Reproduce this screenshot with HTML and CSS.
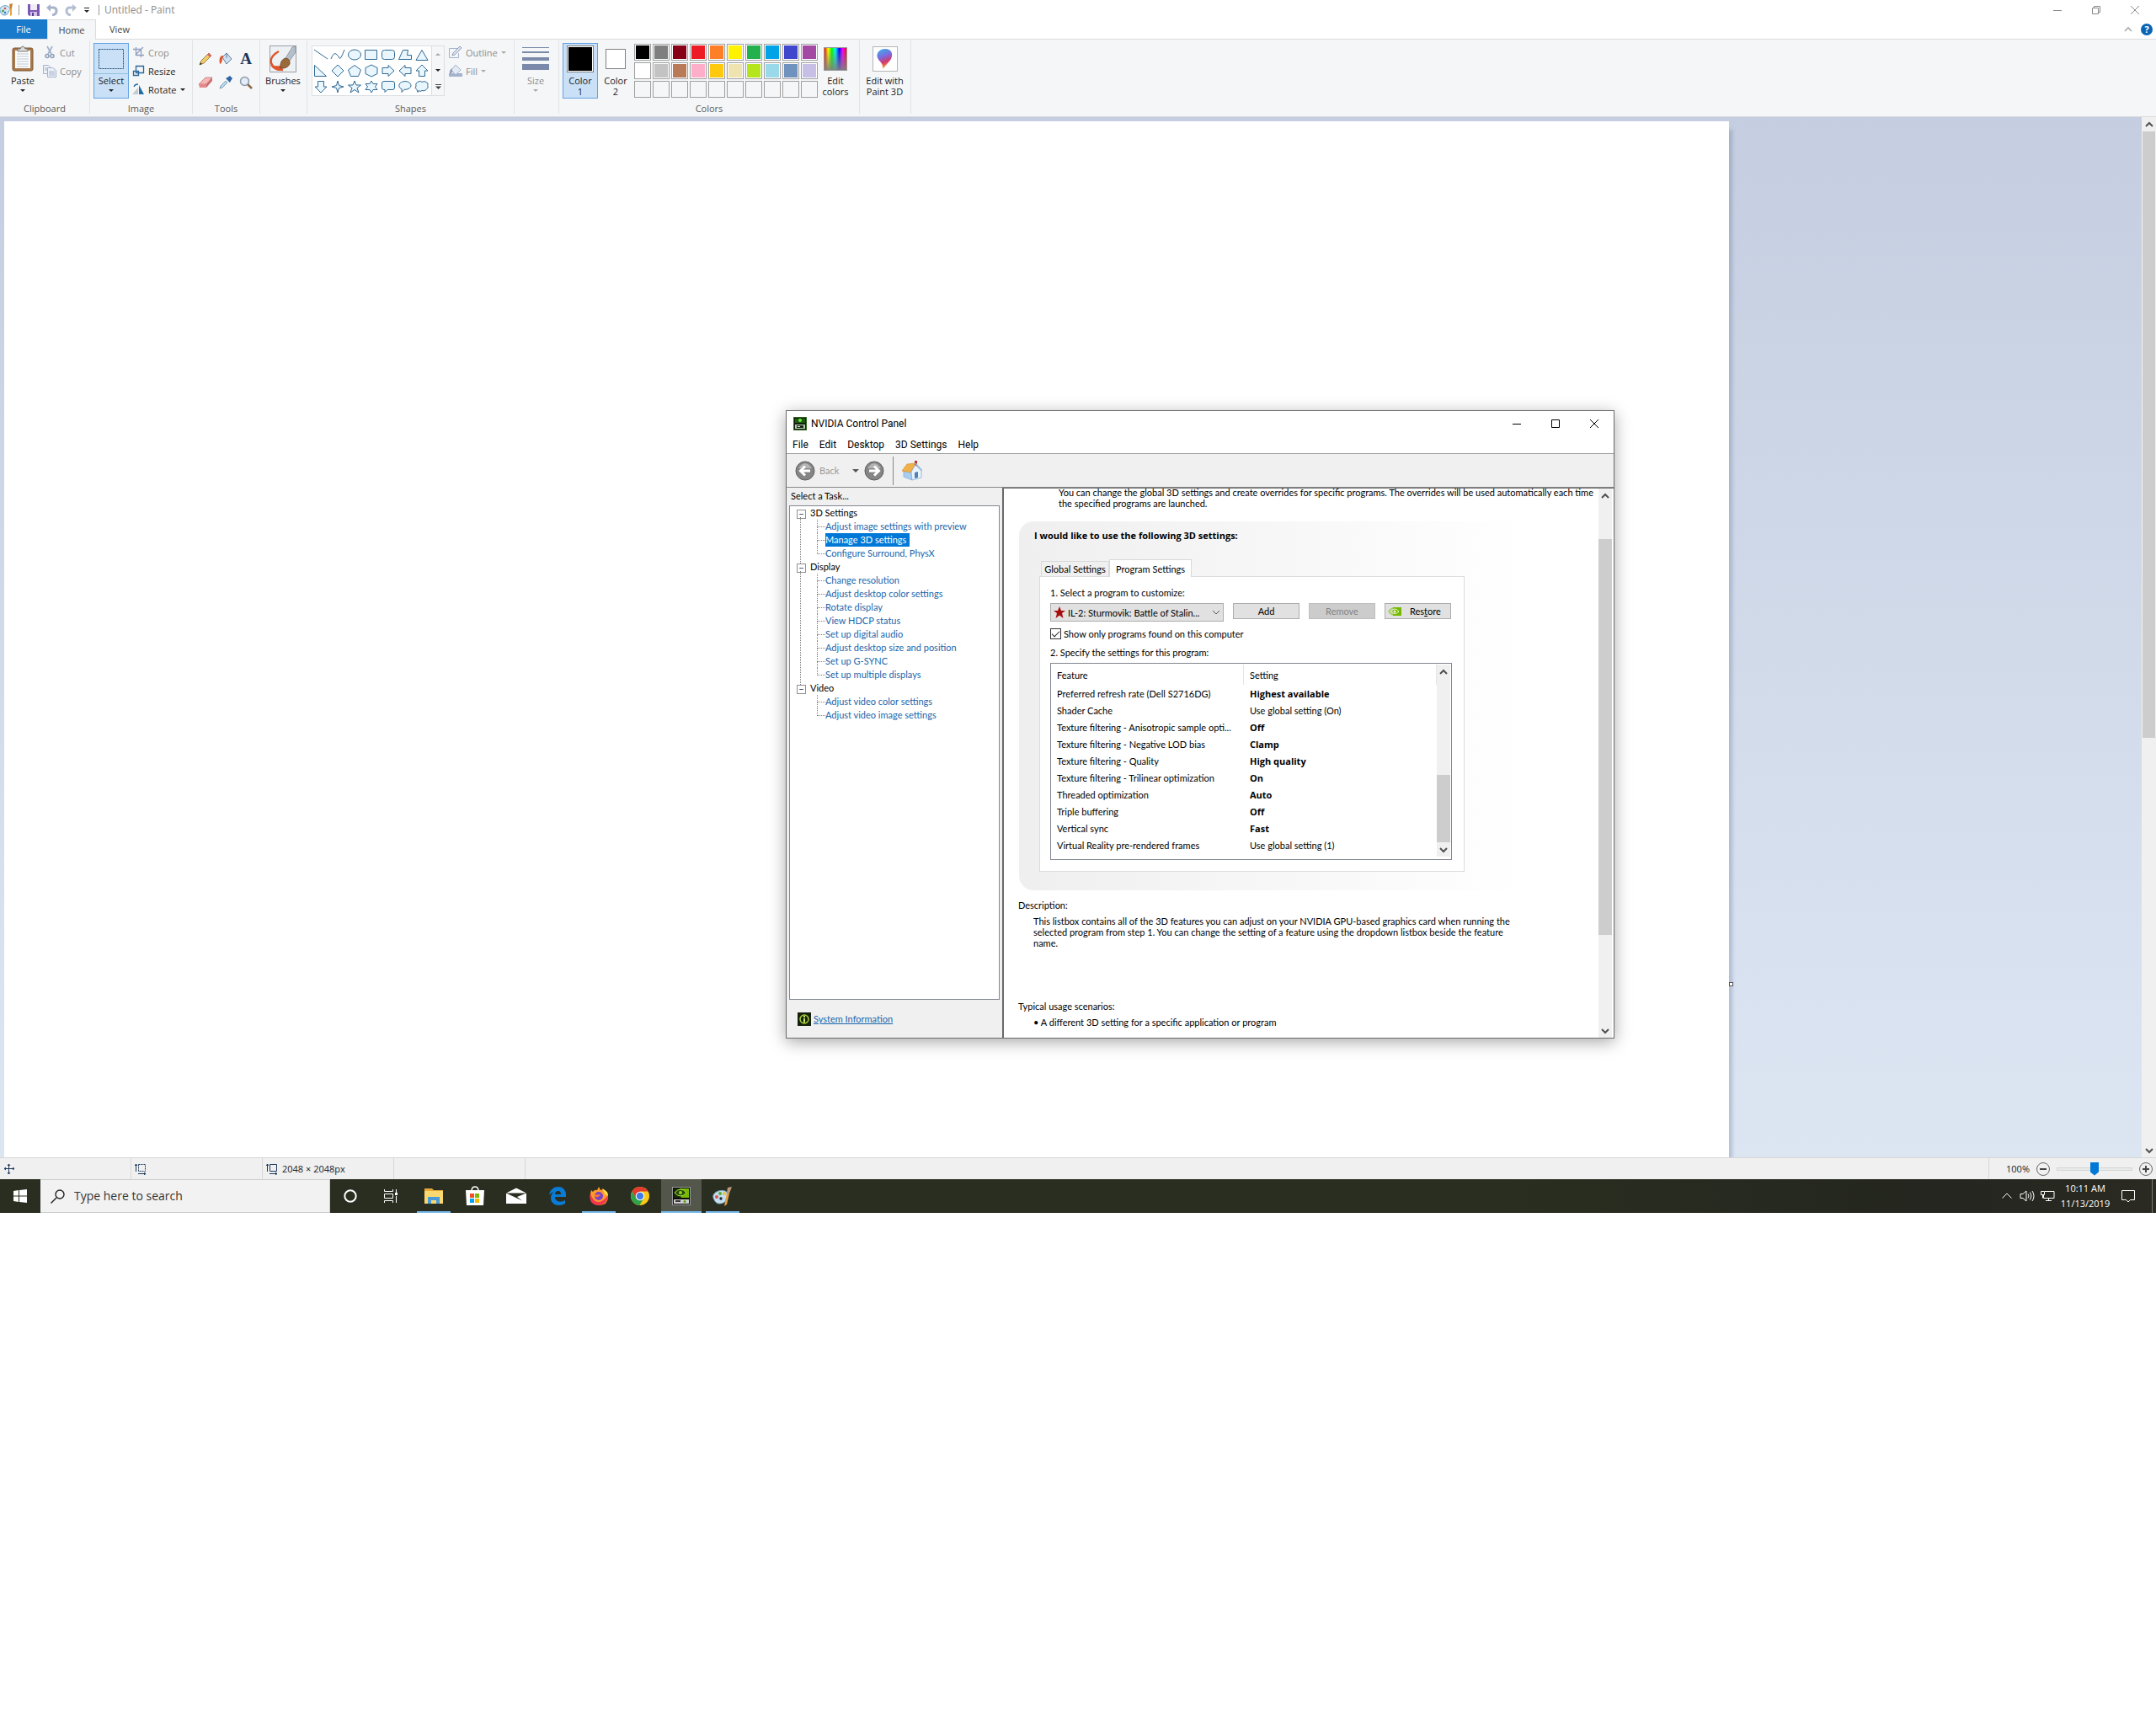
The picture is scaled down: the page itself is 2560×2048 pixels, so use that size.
FILE: index.html
```html
<!DOCTYPE html>
<html lang="en">
<head>
  <meta charset="UTF-8" />
  <meta name="viewport" content="width=device-width, initial-scale=1" />
  <title>Untitled - Paint</title>
  <link rel="stylesheet" href="styles.css">
</head>
<body>
  <div class="desktop">
    <div class="paint">
      <header class="titlebar">
        <svg class="app-icon" viewBox="0 0 16 16"><path d="M0 9c-2-6 9-9 12-3 1 3-2 2-2 4s-2 4-5 4-4-3-5-5z" fill="#d5e8f5" stroke="#5b9cc4"/><circle cx="3.500" cy="9" r="1.400" fill="#3fa33f"/><circle cx="6" cy="6" r="1.300" fill="#d9534f"/><circle cx="6" cy="11" r="1.300" fill="#3a7bd5"/><path d="M12 5h2v9l-2 1z" fill="#e8a33d"/><path d="M11 1l4-1-1 6h-2z" fill="#c9812b"/></svg>
        <span class="bar"></span>
        <button class="qat" aria-label="Save"><svg viewBox="0 0 14 14"><path d="M0 0h14v14H2l-2-2z" fill="#7e57b5"/><path d="M3 0h8v7H3z" fill="#f1edf8"/><path d="M3 9h8v5H3z" fill="#cfc3e6"/><path d="M5 10h2v4H5z" fill="#5a3b8c"/></svg></button>
        <button class="qat" aria-label="Undo"><svg viewBox="0 0 14 14"><path d="M3 4h5q4 0 4 4t-5 5" fill="none" stroke="#a9b4cb" stroke-width="3"/><path d="M0 4l5-4v9z" fill="#a9b4cb"/></svg></button>
        <button class="qat" aria-label="Redo"><svg viewBox="0 0 14 14"><path d="M11 4H6q-4 0-4 4t5 5" fill="none" stroke="#b5bfd3" stroke-width="3"/><path d="M14 4L9 0v9z" fill="#b5bfd3"/></svg></button>
        <button class="qat qat-more" aria-label="Customize"><svg viewBox="0 0 8 8"><path d="M1 1.500h6" stroke="#222"/><path d="M1 4h6L4 7z" fill="#222"/></svg></button>
        <span class="bar"></span>
        <span class="title">Untitled - Paint</span>
        <div class="win-buttons">
          <button aria-label="Minimize"><svg viewBox="0 0 10 10"><path d="M0 5.500h10"/></svg></button>
          <button aria-label="Restore"><svg viewBox="0 0 10 10"><path d="M.5 2.500h7v7h-7zM2.500 2.500v-2h7v7h-2"/></svg></button>
          <button aria-label="Close"><svg viewBox="0 0 10 10"><path d="M0 0l10 10M10 0L0 10"/></svg></button>
        </div>
      </header>

      <nav class="tabs">
        <button class="tab file">File</button>
        <button class="tab home">Home</button>
        <button class="tab">View</button>
        <div class="tabs-right">
          <button aria-label="Collapse ribbon"><svg width="10" height="8" viewBox="0 0 10 8"><path d="M1 6l4-4 4 4" fill="none" stroke="#aaa" stroke-width="1.600"/></svg></button>
          <button class="help" aria-label="Help">?</button>
        </div>
      </nav>

      <div class="ribbon">
        <section class="group">
          <div class="group-body clipboard">
            <button class="big">
              <span class="pic"><svg width="26" height="32" viewBox="0 0 26 32"><rect x="1" y="3" width="24" height="27" rx="2" fill="#a9794a" stroke="#7d5630"/><path d="M4 6h18v21H4z" fill="#fff"/><path d="M6 10h14M6 13h14M6 16h14M6 19h14M6 22h14M6 25h14" stroke="#b9c4d0"/><path d="M7 7V4h3q3-6 6 0h3v3z" fill="#dcdcdc" stroke="#777"/></svg></span>
              <span class="big-label">Paste</span><i class="caret"></i>
            </button>
            <div class="small-col">
              <button class="small off"><svg viewBox="0 0 16 16"><path d="M5 1l5 9M11 1L6 10" stroke="#9fb0c8" stroke-width="1.600" fill="none"/><circle cx="5" cy="12.500" r="2" fill="none" stroke="#8a9dba" stroke-width="1.500"/><circle cx="11" cy="12.500" r="2" fill="none" stroke="#8a9dba" stroke-width="1.500"/></svg>Cut</button>
              <button class="small off"><svg viewBox="0 0 16 16"><path d="M.5 1.500h6l3 3v7h-9z" fill="#eef2f8" stroke="#a3b3cd"/><path d="M5.500 4.500h6l4 3v8h-10z" fill="#eef2f8" stroke="#a3b3cd"/><path d="M7 9h7M7 11h7M7 13h7M2 5h3M2 7h3" stroke="#a3b3cd"/></svg>Copy</button>
            </div>
          </div>
          <h2>Clipboard</h2>
        </section>

        <section class="group">
          <div class="group-body image">
            <button class="big on split">
              <span class="pic"><svg width="30" height="24" viewBox="0 0 30 24"><rect x=".5" y=".5" width="29" height="23" fill="none" stroke="#1f4e79" stroke-dasharray="2 1"/></svg></span>
              <span class="big-label">Select</span><i class="caret"></i>
            </button>
            <div class="small-col wide">
              <button class="small off"><svg viewBox="0 0 16 16"><path d="M5.500 2v9.500H15M2 4.500h9.500V14M5 11l9-9" fill="none" stroke="#8f9fbd" stroke-width="1.300"/></svg>Crop</button>
              <button class="small"><svg viewBox="0 0 16 16"><path d="M5.500 2.500h9v8h-9zM2.500 8.500h6v5h-6z" fill="#f5f6f7" stroke="#2a679c" stroke-width="1.300"/></svg>Resize</button>
              <button class="small"><svg viewBox="0 0 16 16"><path d="M8 14V6L1 14z" fill="#c3cbd3"/><path d="M9 14V3l6 11z" fill="#1f6ea8"/><path d="M3 5q1-3 5-3" fill="none" stroke="#1f6ea8" stroke-width="1.300"/></svg>Rotate<i class="caret"></i></button>
            </div>
          </div>
          <h2>Image</h2>
        </section>

        <section class="group">
          <div class="group-body tools">
            <button aria-label="Pencil"><svg viewBox="0 0 16 16"><path d="M1 15l2-5L12 1l3 3-9 9z" fill="#f3cd6b" stroke="#8a6b2a" stroke-width=".8"/><path d="M12 1l3 3-2 2-3-3z" fill="#d96b6b"/><path d="M1 15l1-3 2 2z" fill="#333"/></svg></button>
            <button aria-label="Fill"><svg viewBox="0 0 16 16"><path d="M4 6l5-5 6 7-6 6z" fill="#cfe0ee" stroke="#5c7f9e"/><path d="M9 1v6" stroke="#5c7f9e"/><path d="M6 4Q-1 3 1 14q3-1 3-7z" fill="#e2552f"/></svg></button>
            <button aria-label="Text" class="text-tool">A</button>
            <button aria-label="Eraser"><svg viewBox="0 0 16 16"><path d="M0 10L8 2h8l-7 8z" fill="#f7b5b5" stroke="#b96a6a" stroke-width=".7"/><path d="M0 10h9v4H1z" fill="#e38b8b"/><path d="M9 10l7-8v4l-7 8z" fill="#c96f6f"/></svg></button>
            <button aria-label="Color picker"><svg viewBox="0 0 16 16"><path d="M1 15l1-3 6-6 2 2-6 6z" fill="#bcd8ee" stroke="#5a84a8" stroke-width=".7"/><path d="M8 3l5 5 1-2 2-3-3-3-3 2z" fill="#2b65a5"/></svg></button>
            <button aria-label="Magnifier"><svg viewBox="0 0 16 16"><path d="M10 10l5 5" stroke="#8a6a4a" stroke-width="2.500"/><circle cx="6.500" cy="6.500" r="5" fill="#e1eefa" stroke="#8f9aa6" stroke-width="1.500"/></svg></button>
          </div>
          <h2>Tools</h2>
        </section>

        <section class="group">
          <div class="group-body brushes">
            <button class="big">
              <span class="pic"><svg width="32" height="32" viewBox="0 0 32 32"><rect x=".5" y=".5" width="31" height="31" fill="#eef1f4" stroke="#9aa0a6"/><path d="M11 7Q0 13 2 21q3 8 14 8" fill="none" stroke="#e0552b" stroke-width="2.500"/><path d="M1 23q5 2 12 1l3 6Q5 31 1 23z" fill="#e0552b"/><path d="M19 15L27 2l4-1v7l-7 10z" fill="#b4bfca" stroke="#7c8894" stroke-width=".7"/><path d="M13 27q-1-10 6-12 6 1 5 7-3 6-11 5z" fill="#9b6a3a" stroke="#6b4420" stroke-width=".8"/></svg></span>
              <span class="big-label">Brushes</span><i class="caret"></i>
            </button>
          </div>
          <h2></h2>
        </section>

        <section class="group">
          <div class="group-body shapes">
            <div class="gallery">
              <div class="shape-grid">
                <button aria-label="Line"><svg viewBox="0 0 16 14"><path d="M0 1l16 11"/></svg></button>
                <button aria-label="Curve"><svg viewBox="0 0 16 14"><path d="M0 12Q3 4 6 6t4 5 6-10" fill="none"/></svg></button>
                <button aria-label="Oval"><svg viewBox="0 0 16 14"><ellipse cx="8" cy="7" rx="7.500" ry="6"/></svg></button>
                <button aria-label="Rectangle"><svg viewBox="0 0 16 14"><path d="M.5 1.500h14v11H.5z"/></svg></button>
                <button aria-label="Rounded rectangle"><svg viewBox="0 0 16 14"><rect x=".5" y="1.500" width="15" height="11" rx="3"/></svg></button>
                <button aria-label="Polygon"><svg viewBox="0 0 16 14"><path d="M5.500 1.500h6l-1 6h5v5H.5z"/></svg></button>
                <button aria-label="Triangle"><svg viewBox="0 0 16 14"><path d="M8 1.500l7 12H1z"/></svg></button>
                <button aria-label="Right triangle"><svg viewBox="0 0 16 14"><path d="M.5 .5v13h14z"/></svg></button>
                <button aria-label="Diamond"><svg viewBox="0 0 16 14"><path d="M8 0l7 7-7 7-7-7z"/></svg></button>
                <button aria-label="Pentagon"><svg viewBox="0 0 16 14"><path d="M8 .5l7.500 5.500-3 7.500h-9L.5 6z"/></svg></button>
                <button aria-label="Hexagon"><svg viewBox="0 0 16 14"><path d="M8 0l7 3.500v7L8 14l-7-3.500v-7z"/></svg></button>
                <button aria-label="Right arrow"><svg viewBox="0 0 16 14"><path d="M1 3.500h7V.5L15 7l-7 6.500v-3H1z"/></svg></button>
                <button aria-label="Left arrow"><svg viewBox="0 0 16 14"><path d="M15 3.500H8V.5L1 7l7 6.500v-3h7z"/></svg></button>
                <button aria-label="Up arrow"><svg viewBox="0 0 16 14"><path d="M8 0l7 7h-3.500v6.500h-7V7H1z"/></svg></button>
                <button aria-label="Down arrow"><svg viewBox="0 0 16 14"><path d="M8 14l7-7h-3.500V.5h-7V7H1z"/></svg></button>
                <button aria-label="Four-point star"><svg viewBox="0 0 16 14"><path d="M8 0l1.500 5.500L15 7 9.500 8.500 8 14 6.500 8.500 1 7l5.500-1.500z"/></svg></button>
                <button aria-label="Five-point star"><svg viewBox="0 0 16 14"><path d="M8 0l2 5h5.500L11 8.500l2 5.500-5-3.500L3 14l2-5.500L.5 5H6z"/></svg></button>
                <button aria-label="Six-point star"><svg viewBox="0 0 16 14"><path d="M8 0l2 3.500h5L12.500 7l2.500 3.500h-5L8 14l-2-3.500H1L3.500 7 1 3.500h5z"/></svg></button>
                <button aria-label="Rounded callout"><svg viewBox="0 0 16 14"><path d="M3 .5h10q2.500 0 2.500 2.500v5q0 2.500-2.500 2.500H7L4 13.500v-3H3Q.5 10.500.5 8V3Q.5.500 3 .5z"/></svg></button>
                <button aria-label="Oval callout"><svg viewBox="0 0 16 14"><path d="M4 13.500V9.800C-2 7 1 .5 8 .5s10 7 3 9.300q-2 .7-4 .5z"/></svg></button>
                <button aria-label="Cloud callout"><svg viewBox="0 0 16 14"><path d="M4 1q3-1.500 4 .5 3-2 5 0 3 1 2 4 1 3-2 5-2 2-5 1-2 2-4 0l-1 2-1-3Q-1 9 1 6 0 2 4 1z"/></svg></button>
              </div>
              <div class="gallery-scroll">
                <button aria-label="Scroll up"><i class="caret up"></i></button>
                <button aria-label="Scroll down"><i class="caret"></i></button>
                <button aria-label="More shapes"><svg width="7" height="6" viewBox="0 0 7 6"><path d="M0 .5h7" stroke="#444"/><path d="M0 2.500h7L3.500 6z" fill="#444"/></svg></button>
              </div>
            </div>
            <div class="small-col">
              <button class="small off"><svg viewBox="0 0 16 16"><path d="M.5 3.500h10M.5 3.500v11h11V9" fill="none" stroke="#a3b3cd"/><path d="M4 12l1-3 8-8 2 2-8 8z" fill="#dbe2ee" stroke="#8f9fbd"/></svg>Outline<i class="caret"></i></button>
              <button class="small off"><svg viewBox="0 0 16 16"><path d="M0 11h16v4H0z" fill="#a3b3cd"/><path d="M3 7l5-6 6 6-6 6z" fill="#e4eaf3" stroke="#a3b3cd"/><path d="M4 5Q0 7 1 12l3-2z" fill="#8f9fbd"/></svg>Fill<i class="caret"></i></button>
            </div>
          </div>
          <h2>Shapes</h2>
        </section>

        <section class="group">
          <div class="group-body size">
            <button class="big off">
              <span class="pic"><svg width="32" height="28" viewBox="0 0 32 28"><path d="M0 0h32v1H0zM0 5h32v2H0zM0 12h32v4H0zM0 20h32v7H0z" fill="#7b8aaa"/></svg></span>
              <span class="big-label">Size</span><i class="caret"></i>
            </button>
          </div>
          <h2></h2>
        </section>

        <section class="group">
          <div class="group-body colors">
            <button class="big on"><span class="pic"><span class="well black"></span></span><span class="big-label">Color<br>1</span></button>
            <button class="big"><span class="pic"><span class="well small-well white"></span></span><span class="big-label">Color<br>2</span></button>
            <div class="swatches">
              <button class="swatch black" aria-label="Black"></button>
              <button class="swatch gray" aria-label="Gray"></button>
              <button class="swatch darkred" aria-label="Dark red"></button>
              <button class="swatch red" aria-label="Red"></button>
              <button class="swatch orange" aria-label="Orange"></button>
              <button class="swatch yellow" aria-label="Yellow"></button>
              <button class="swatch green" aria-label="Green"></button>
              <button class="swatch turquoise" aria-label="Turquoise"></button>
              <button class="swatch indigo" aria-label="Indigo"></button>
              <button class="swatch purple" aria-label="Purple"></button>
              <button class="swatch white" aria-label="White"></button>
              <button class="swatch lightgray" aria-label="Light gray"></button>
              <button class="swatch brown" aria-label="Brown"></button>
              <button class="swatch rose" aria-label="Rose"></button>
              <button class="swatch gold" aria-label="Gold"></button>
              <button class="swatch lightyellow" aria-label="Light yellow"></button>
              <button class="swatch lime" aria-label="Lime"></button>
              <button class="swatch lightturquoise" aria-label="Light turquoise"></button>
              <button class="swatch bluegray" aria-label="Blue gray"></button>
              <button class="swatch lavender" aria-label="Lavender"></button>
              <button class="swatch none" aria-label="Custom 1"></button>
              <button class="swatch none" aria-label="Custom 2"></button>
              <button class="swatch none" aria-label="Custom 3"></button>
              <button class="swatch none" aria-label="Custom 4"></button>
              <button class="swatch none" aria-label="Custom 5"></button>
              <button class="swatch none" aria-label="Custom 6"></button>
              <button class="swatch none" aria-label="Custom 7"></button>
              <button class="swatch none" aria-label="Custom 8"></button>
              <button class="swatch none" aria-label="Custom 9"></button>
              <button class="swatch none" aria-label="Custom 10"></button>
            </div>
            <button class="big"><span class="pic"><span class="rainbow"></span></span><span class="big-label">Edit<br>colors</span></button>
          </div>
          <h2>Colors</h2>
        </section>

        <section class="group">
          <div class="group-body paint3d">
            <button class="big">
              <span class="pic"><svg width="30" height="30" viewBox="0 0 30 30"><defs><linearGradient id="drop" x1="0" y1="0" x2=".3" y2="1"><stop offset="0" stop-color="#35b8e8"/><stop offset=".45" stop-color="#7a6be0"/><stop offset=".75" stop-color="#d6396b"/><stop offset="1" stop-color="#f5a623"/></linearGradient></defs><rect x=".5" y=".5" width="29" height="29" fill="#fff" stroke="#b5b5b5"/><path d="M12 27q1-5-3-9-5-5-3-10 3-5 9-5 6 0 8 5 1 6-4 11z" fill="url(#drop)"/></svg></span>
              <span class="big-label">Edit with<br>Paint 3D</span>
            </button>
          </div>
          <h2></h2>
        </section>
      </div>

      <main class="workspace">
        <div class="canvas-area">
          <div class="canvas"></div>
          <span class="handle"></span>
        </div>
        <div class="scroll paint-scroll">
          <button aria-label="Scroll up"><svg viewBox="0 0 10 8"><path d="M1 6l4-4 4 4"/></svg></button>
          <span class="thumb"></span>
          <button class="down" aria-label="Scroll down"><svg viewBox="0 0 10 8"><path d="M1 2l4 4 4-4"/></svg></button>
        </div>
      </main>

      <footer class="status">
        <div class="cell"><svg viewBox="0 0 14 14"><path d="M6.500 1v12M1 6.500h12M5 3l1.500-2L8 3M5 11l1.500 2L8 11M3 5L1 6.500 3 8M11 5l2 1.500L11 8"/></svg></div>
        <div class="cell"><svg viewBox="0 0 14 14"><path d="M1.500 10V1M0 3l1.500-2L3 3M4 12.500h9M11 11l2 1.500-2 1.500"/><path d="M4.500 1.500h8v8h-8z" stroke-dasharray="2 1"/></svg></div>
        <div class="cell"><svg viewBox="0 0 14 14"><path d="M1.500 10V1M0 3l1.500-2L3 3M4 12.500h9M11 11l2 1.500-2 1.500M4.500 1.500h8v8h-8z"/></svg>2048 × 2048px</div>
        <div class="cell"></div>
        <div class="zoom">
          <label for="zoom">100%</label>
          <button aria-label="Zoom out"><svg viewBox="0 0 10 10"><path d="M1 5h8"/></svg></button>
          <input type="range" id="zoom" min="0" max="100" value="50">
          <button aria-label="Zoom in"><svg viewBox="0 0 10 10"><path d="M1 5h8M5 1v8"/></svg></button>
        </div>
      </footer>
    </div>

    <div class="nv">
      <header class="nv-title">
        <svg width="16" height="16" viewBox="0 0 16 16"><path d="M0 0h16v16H0z" fill="#2f6a1c"/><path d="M1 1h14v14H1z" fill="#14200f"/><path d="M2 2h12v5H2z" fill="#1f5a10"/><circle cx="8" cy="4" r="2" fill="#6df03a"/><path d="M2 9h12v5H2z" fill="#b9c7b4"/><path d="M4 10h8v3H4z" fill="#1a2d14"/><path d="M5 11h3v1H5z" fill="#dfe8da"/></svg>
        <span>NVIDIA Control Panel</span>
        <div class="win-buttons dark">
          <button aria-label="Minimize"><svg viewBox="0 0 10 10"><path d="M0 5.500h10"/></svg></button>
          <button aria-label="Maximize"><svg viewBox="0 0 10 10"><path d="M.5.500h9v9h-9z"/></svg></button>
          <button aria-label="Close"><svg viewBox="0 0 10 10"><path d="M0 0l10 10M10 0L0 10"/></svg></button>
        </div>
      </header>
      <nav class="nv-menu">
        <button>File</button><button>Edit</button><button>Desktop</button><button>3D Settings</button><button>Help</button>
      </nav>
      <div class="nv-toolbar">
        <button class="nav-back" disabled>
          <svg width="24" height="24" viewBox="0 0 24 24"><circle cx="12" cy="12" r="11" fill="#858585" stroke="#5f5f5f"/><path d="M4 9Q12-3 20 9z" fill="#b5b5b5"/><path d="M18 12H7M12 6.500L6.500 12l5.500 5.500" fill="none" stroke="#fff" stroke-width="3"/></svg>
          Back
        </button>
        <button class="history" aria-label="History"><i class="caret gray-caret"></i></button>
        <button aria-label="Forward"><svg width="24" height="24" viewBox="0 0 24 24"><circle cx="12" cy="12" r="11" fill="#858585" stroke="#5f5f5f"/><path d="M4 9Q12-3 20 9z" fill="#b5b5b5"/><path d="M6 12h11M12 6.500l5.500 5.500-5.500 5.500" fill="none" stroke="#fff" stroke-width="3"/></svg></button>
        <span class="nv-sep"></span>
        <button aria-label="Home"><svg width="24" height="24" viewBox="0 0 24 24"><path d="M15 0h3v7h-3z" fill="#b5342a"/><path d="M2 12l10 1v10l-10-4z" fill="#a9cdf0" stroke="#7aa7d4" stroke-width=".7"/><path d="M11 13l5-8 7 7v8l-11 3z" fill="#e9f3fc" stroke="#7aa7d4" stroke-width=".7"/><path d="M15 14l4-1v7l-4 1z" fill="#4f7fb5"/><path d="M0 12L6 4l10-1-6 11z" fill="#f2b04c" stroke="#c98a2c" stroke-width=".6"/><path d="M16 3l8 9" stroke="#9fbbd8" stroke-width="1.500"/></svg></button>
      </div>
      <div class="nv-main">
        <aside class="nv-side">
          <div class="task-title">Select a Task...</div>
          <div class="tree">
            <ul>
              <li><span class="root">3D Settings</span>
                <ul>
                  <li><a href="#">Adjust image settings with preview</a></li>
                  <li><a href="#" class="sel">Manage 3D settings</a></li>
                  <li><a href="#">Configure Surround, PhysX</a></li>
                </ul>
              </li>
              <li><span class="root">Display</span>
                <ul>
                  <li><a href="#">Change resolution</a></li>
                  <li><a href="#">Adjust desktop color settings</a></li>
                  <li><a href="#">Rotate display</a></li>
                  <li><a href="#">View HDCP status</a></li>
                  <li><a href="#">Set up digital audio</a></li>
                  <li><a href="#">Adjust desktop size and position</a></li>
                  <li><a href="#">Set up G-SYNC</a></li>
                  <li><a href="#">Set up multiple displays</a></li>
                </ul>
              </li>
              <li><span class="root">Video</span>
                <ul>
                  <li><a href="#">Adjust video color settings</a></li>
                  <li><a href="#">Adjust video image settings</a></li>
                </ul>
              </li>
            </ul>
          </div>
          <div class="sysinfo">
            <svg width="16" height="16" viewBox="0 0 16 16"><path d="M0 0h16v16H0z" fill="#16200d"/><circle cx="8" cy="8" r="5" fill="none" stroke="#a4cf3a" stroke-width="1.500"/><path d="M7 4h2v2H7zM7 7h2v5H7z" fill="#c4e36a"/></svg>
            <a href="#">System Information</a>
          </div>
        </aside>

        <div class="nv-pane">
          <div class="page">
            <p class="intro">You can change the global 3D settings and create overrides for specific programs. The overrides will be used automatically each time<br>the specified programs are launched.</p>
            <section class="settings">
              <h3>I would like to use the following 3D settings:</h3>
              <div class="nv-tabs">
                <button>Global Settings</button>
                <button class="active">Program Settings</button>
              </div>
              <div class="panel">
                <label for="program">1. Select a program to customize:</label>
                <div class="program-row">
                  <div class="program">
                    <select id="program"><option>IL-2: Sturmovik: Battle of Stalin...</option></select>
                    <svg class="star" viewBox="0 0 14 14"><path d="M7 0l2 5h5l-4 3 1.500 6L7 10.500 2.500 14 4 8 0 5h5z" fill="#a80d0d"/></svg>
                    <svg class="chevron" viewBox="0 0 10 8"><path d="M1 2l4 4 4-4" fill="none" stroke="#555"/></svg>
                  </div>
                  <button>Add</button>
                  <button disabled>Remove</button>
                  <button class="restore"><svg width="16" height="10" viewBox="0 0 16 10"><path d="M0 5Q3 0 8 0v10Q3 10 0 5z" fill="#a9cf6a"/><path d="M6 0h10v10H6z" fill="#76b900"/><path d="M3 5q5-6 10 0-5 5-10 0z" fill="none" stroke="#e9f5d0"/><circle cx="8" cy="5" r="1.500" fill="#e9f5d0"/></svg><span>Res<u>t</u>ore</span></button>
                </div>
                <div class="check"><input type="checkbox" id="only" checked><label for="only">Show only programs found on this computer</label></div>
                <div class="step">2. Specify the settings for this program:</div>
                <div class="listbox">
                  <table>
                    <thead><tr><th>Feature</th><th>Setting</th></tr></thead>
                    <tbody>
                      <tr><td>Preferred refresh rate (Dell S2716DG)</td><td><b>Highest available</b></td></tr>
                      <tr><td>Shader Cache</td><td>Use global setting (On)</td></tr>
                      <tr><td>Texture filtering - Anisotropic sample opti...</td><td><b>Off</b></td></tr>
                      <tr><td>Texture filtering - Negative LOD bias</td><td><b>Clamp</b></td></tr>
                      <tr><td>Texture filtering - Quality</td><td><b>High quality</b></td></tr>
                      <tr><td>Texture filtering - Trilinear optimization</td><td><b>On</b></td></tr>
                      <tr><td>Threaded optimization</td><td><b>Auto</b></td></tr>
                      <tr><td>Triple buffering</td><td><b>Off</b></td></tr>
                      <tr><td>Vertical sync</td><td><b>Fast</b></td></tr>
                      <tr><td>Virtual Reality pre-rendered frames</td><td>Use global setting (1)</td></tr>
                    </tbody>
                  </table>
                  <div class="scroll list-scroll">
                    <button aria-label="Scroll up"><svg viewBox="0 0 10 8"><path d="M1 6l4-4 4 4"/></svg></button>
                    <span class="thumb"></span>
                    <button class="down" aria-label="Scroll down"><svg viewBox="0 0 10 8"><path d="M1 2l4 4 4-4"/></svg></button>
                  </div>
                </div>
              </div>
            </section>
            <h4>Description:</h4>
            <p class="desc">This listbox contains all of the 3D features you can adjust on your NVIDIA GPU-based graphics card when running the<br>selected program from step 1. You can change the setting of a feature using the dropdown listbox beside the feature<br>name.</p>
            <h4>Typical usage scenarios:</h4>
            <p class="usage">• A different 3D setting for a specific application or program</p>
          </div>
          <div class="scroll page-scroll">
            <button aria-label="Scroll up"><svg viewBox="0 0 10 8"><path d="M1 6l4-4 4 4"/></svg></button>
            <span class="thumb"></span>
            <button class="down" aria-label="Scroll down"><svg viewBox="0 0 10 8"><path d="M1 2l4 4 4-4"/></svg></button>
          </div>
        </div>
      </div>
    </div>

    <div class="taskbar">
      <button class="start" aria-label="Start"><svg width="16" height="16" viewBox="0 0 16 16"><path d="M0 2l6-1v6.500H0zM7 1l9-1v7.500H7zM0 8.500h6V15l-6-1zM7 8.500h9V16l-9-1z" fill="#fff"/></svg></button>
      <div class="search">
        <svg width="17" height="17" viewBox="0 0 17 17"><circle cx="11" cy="6" r="5" fill="none" stroke="#222" stroke-width="1.400"/><path d="M7 10l-6.500 6.500" stroke="#222" stroke-width="1.400"/></svg>
        <input type="text" placeholder="Type here to search" aria-label="Type here to search">
      </div>
      <button aria-label="Cortana"><svg width="16" height="16" viewBox="0 0 16 16"><circle cx="8" cy="8" r="6.700" fill="none" stroke="#fff" stroke-width="2"/></svg></button>
      <button aria-label="Task View"><svg width="16" height="16" viewBox="0 0 16 16"><path d="M.5 0v2.500h10V0M.5 16v-2.500h10V16M.5 5.500h10v5H.5zM14.500 0v4M14.500 8v8" fill="none" stroke="#fff"/><path d="M13 4h3v3h-3z" fill="#fff"/></svg></button>
      <div class="apps">
        <button class="open" aria-label="File Explorer"><svg width="22" height="20" viewBox="0 0 22 20"><path d="M0 1h9l2 2h11v16H0z" fill="#e8a93a"/><path d="M0 4h22v15H0z" fill="#fbd86f"/><path d="M4 19v-8h14v8h-4v-4H8v4z" fill="#4a9bd8"/></svg></button>
        <button aria-label="Store"><svg width="24" height="24" viewBox="0 0 24 24"><path d="M8 6q0-5 4-5t4 5" fill="none" stroke="#fff" stroke-width="1.500"/><path d="M1 5h22l-1 18H2z" fill="#fff"/><path d="M6 9h5v5H6z" fill="#f25022"/><path d="M12 9h5v5h-5z" fill="#7fba00"/><path d="M6 15h5v5H6z" fill="#00a4ef"/><path d="M12 15h5v5h-5z" fill="#ffb900"/></svg></button>
        <button aria-label="Mail"><svg width="24" height="20" viewBox="0 0 24 20"><path d="M0 7l12-6 12 6v12H0z" fill="#fff"/><path d="M0 6.500h24L13 11l6 4.500z" fill="#292d20"/><path d="M1 6h22L12 .5z" fill="#fff"/></svg></button>
        <button aria-label="Edge"><svg width="22" height="22" viewBox="0 0 22 22"><path d="M1 10C2 3 7 0 12 0c6 0 9 5 9 9v3H8c0 6 7 7 12 4v4c-7 4-17 2-17-7 0-3 2-6 4-7-3 1-5 2-6 4zM8 9h7q0-4-3-4-4 0-4 4z" fill="#0a7cd6"/></svg></button>
        <button class="open" aria-label="Firefox"><svg width="24" height="24" viewBox="0 0 24 24"><path d="M3 5l2 2q2-3 5-2l2-4 2 4 3-1 2 4 3-1q4 16-10 16-14-1-9-18z" fill="#ff9a2b"/><path d="M2 9q-3 13 10 14 10-1 11-12-6 8-11 8-7 0-10-10z" fill="#f3364e"/><circle cx="12" cy="12" r="5" fill="#7a44c9"/><path d="M6 9q4 3 8 0-1 5-6 4z" fill="#ff7a2b"/><path d="M16 3q7 3 7 9-2-2-3-1z" fill="#ffdf4a"/></svg></button>
        <button aria-label="Chrome"><svg width="22" height="22" viewBox="0 0 22 22"><circle cx="11" cy="11" r="11" fill="#fbc916"/><path d="M1.500 5.500A11 11 0 0 1 20.500 5.500H11L6 14z" fill="#e33b2e"/><path d="M1.500 5.500A11 11 0 0 0 10.500 22L15.500 13.500 6.500 14z" fill="#2fa24c"/><circle cx="11" cy="11" r="5.300" fill="#fff"/><circle cx="11" cy="11" r="4.200" fill="#3f7ee8"/></svg></button>
        <button class="open active" aria-label="NVIDIA Control Panel"><svg width="22" height="22" viewBox="0 0 22 22"><path d="M0 0h22v22H0z" fill="#9a9a9a"/><path d="M1 1h20v20H1z" fill="#0a0a0a"/><path d="M2 2h18v11H2z" fill="#182b08"/><path d="M9 2h11v11h-9z" fill="#76b900"/><path d="M3 7q7-8 14 0-7 8-14 0z" fill="#2a4a0c" stroke="#a8e63a"/><circle cx="10" cy="7" r="2" fill="#8fd61a"/><path d="M2 15h18v5H2z" fill="#cfcfcf"/><path d="M4 16h6v2H4z" fill="#333"/><circle cx="15" cy="17.500" r="1.500" fill="#5a9c10"/></svg></button>
        <button class="open" aria-label="Paint"><svg width="24" height="24" viewBox="0 0 24 24"><path d="M1 14C-1 6 15 2 18 9c2 4-2 4-2 7s-4 5-8 5-6-4-7-7z" fill="#c3dff0" stroke="#7fa9c4"/><circle cx="5" cy="13" r="2" fill="#d9534f"/><circle cx="9" cy="9" r="2" fill="#58a846"/><circle cx="14" cy="9" r="2" fill="#e8c23d"/><circle cx="10" cy="15" r="1.700" fill="#1c2a33"/><path d="M17 8l3 1-3 13-3 2z" fill="#e2a04a"/><path d="M17 8l1-6 5-1-3 8z" fill="#bd9a78"/></svg></button>
      </div>
      <div class="tray">
        <button aria-label="Show hidden icons"><svg width="14" height="14" viewBox="0 0 14 14"><path d="M1.500 9.500L7 4l5.500 5.500"/></svg></button>
        <button aria-label="Volume"><svg width="18" height="16" viewBox="0 0 18 16"><path d="M1 5.500h3l4-3.500v12l-4-3.500H1zM10 5.500q2 2.500 0 5M12.500 3.500q3 4.500 0 9M15 2q4 6 0 12"/></svg></button>
        <button aria-label="Network"><svg width="18" height="16" viewBox="0 0 18 16"><path d="M6 2.500h11v8H4.500V7M10.500 10.500v3M7 13.500h7M1.500 2.500h4v4h-4zM3.500 6.500v4"/></svg></button>
        <div class="clock">10:11 AM<br>11/13/2019</div>
        <button class="notify" aria-label="Notifications"><svg width="18" height="18" viewBox="0 0 18 18"><path d="M1.500 2.500h15v11h-5L9 16l-2.500-2.500h-5z"/></svg></button>
        <button class="peek" aria-label="Show desktop"></button>
      </div>
    </div>
  </div>
</body>
</html>
```
FILE: styles.css
```css
* { box-sizing: border-box; }
body {
  margin: 0;
  background: #fff;
  font-family: "Open Sans", "Noto Sans", sans-serif;
  font-size: 11px;
  line-height: 13px;
  color: #222;
}
button {
  font: inherit;
  color: inherit;
  background: none;
  border: 0;
  padding: 0;
  display: flex;
  align-items: center;
  justify-content: center;
}
svg { display: block; flex: none; }
h2, h3, h4, p, ul { margin: 0; padding: 0; font-size: inherit; font-weight: normal; }
.desktop { position: relative; }

/* paint title bar */
.titlebar { display: flex; align-items: center; height: 23px; }
.app-icon { width: 16px; height: 16px; }
.bar { width: 1px; height: 12px; background: #999; margin: 0 6px; }
.qat { width: 22px; height: 22px; }
.qat svg { width: 14px; height: 14px; }
.qat-more { width: 16px; }
.qat-more svg { width: 8px; height: 8px; }
.title { color: #8c8c8c; font-size: 12px; }
.win-buttons { display: flex; margin-left: auto; }
.titlebar .win-buttons { margin-right: 2px; }
.win-buttons button { width: 46px; height: 20px; }
.win-buttons svg { width: 10px; height: 10px; fill: none; stroke: #888; }
.win-buttons.dark svg { stroke: #000; }

/* ribbon tabs */
.tabs { display: flex; height: 24px; border-bottom: 1px solid #dadbdc; }
.tab { height: 23px; padding: 0 16px; color: #444; }
.file { width: 56px; background: #1979ca; color: #fff; }
.home { width: 58px; height: 24px; background: #f5f6f7; border: 1px solid #dadbdc; border-bottom: 0; }
.tabs-right { display: flex; align-items: center; gap: 10px; margin-left: auto; padding-right: 4px; }
.help { width: 14px; height: 14px; border-radius: 50%; background: #0a64b4; color: #fff; font-weight: bold; }

/* ribbon */
.ribbon { display: flex; padding: 1px 0 3px; background: #f5f6f7; border-bottom: 1px solid #dadbdc; }
.group { display: flex; flex-direction: column; justify-content: space-between; height: 87px; border-right: 1px solid #e2e3e4; }
.group h2 { height: 13px; line-height: 13px; text-align: center; color: #5a5a5a; }
.group-body { display: flex; padding: 3px 3px 0; }
.clipboard { gap: 3px; padding-left: 6px; }
.image { gap: 3px; padding-left: 4px; }
.big { flex-direction: column; justify-content: flex-start; width: 42px; height: 66px; border: 1px solid transparent; }
.big.on { background: #c9e0f7; border-color: #62a2e4; }
.pic { display: flex; align-items: center; justify-content: center; width: 100%; height: 36px; border-bottom: 1px solid transparent; }
.split .pic { border-color: #92c0e0; }
.big-label { padding-top: 1px; white-space: nowrap; }
.caret { width: 0; height: 0; margin-top: 4px; border: 3px solid transparent; border-top-color: #222; border-bottom: 0; }
.caret.up { border-top: 0; border-bottom: 3px solid #aaa; }
.off { color: #8d8d8d; }
.off .caret { border-top-color: #aaa; }
.small-col { display: flex; flex-direction: column; width: 52px; }
.small-col.wide { width: 69px; }
.small { justify-content: flex-start; gap: 4px; height: 22px; white-space: nowrap; }
.small svg { width: 16px; height: 16px; }
.small .caret { margin-top: 0; }
.tools { display: grid; grid-template-columns: repeat(3, 24px); padding: 8px 4px 0 3px; }
.tools button { height: 28px; }
.tools svg { width: 16px; height: 16px; }
.text-tool { font: bold 19px/20px "Liberation Serif", serif; color: #1d3557; }
.brushes .big { width: 48px; }
.brushes { padding-right: 4px; }
.shapes { padding: 6px 3px 0 5px; gap: 5px; }
.shapes .small-col { width: 74px; margin-top: -3px; }
.gallery { display: flex; height: 60px; background: #fff; border: 1px solid #dcdfe3; }
.shape-grid { display: grid; grid-template-columns: repeat(7, 20px); grid-auto-rows: 19px; }
.shape-grid svg { width: 16px; height: 14px; fill: #eaf6fd; stroke: #2f6a95; overflow: visible; }
.gallery-scroll { display: flex; flex-direction: column; width: 15px; margin-left: 1px; background: #f5f6f7; border-left: 1px solid #dcdfe3; }
.gallery-scroll button { flex: 1; }
.gallery-scroll .caret { margin: 0; }
.size { padding: 3px 6px 0 4px; }
.colors { padding: 3px 7px 0 4px; }
.well { width: 32px; height: 32px; border: 1px solid #808080; box-shadow: inset 0 0 0 1px #fff; }
.small-well { width: 24px; height: 24px; }
.swatches { display: grid; grid-template-columns: repeat(10, 20px); grid-auto-rows: 20px; gap: 2px; padding: 1px 0 0 1px; }
.swatch { border: 1px solid #a0a0a0; box-shadow: inset 0 0 0 1px #fff; }
.swatch.none { box-shadow: none; }
.black { background: #000; }
.gray { background: #7f7f7f; }
.darkred { background: #880015; }
.red { background: #ed1c24; }
.orange { background: #ff7f27; }
.yellow { background: #fff200; }
.green { background: #22b14c; }
.turquoise { background: #00a2e8; }
.indigo { background: #3f48cc; }
.purple { background: #a349a4; }
.white { background: #fff; }
.lightgray { background: #c3c3c3; }
.brown { background: #b97a57; }
.rose { background: #ffaec9; }
.gold { background: #ffc90e; }
.lightyellow { background: #efe4b0; }
.lime { background: #b5e61d; }
.lightturquoise { background: #99d9ea; }
.bluegray { background: #7092be; }
.lavender { background: #c8bfe7; }
.rainbow {
  width: 28px; height: 28px; border: 1px solid #999;
  background: linear-gradient(rgba(128,128,128,0), rgba(128,128,128,.9)), linear-gradient(90deg, red, yellow, lime, cyan, blue, magenta, red);
}
.paint3d { padding-right: 4px; }
.paint3d .big { width: 53px; }

/* canvas */
.workspace { display: flex; height: 1235px; background: linear-gradient(#c5cee0, #dce6f3); }
.canvas-area { position: relative; flex: 1; padding: 5px 0 0 5px; overflow: hidden; }
.canvas { width: 2048px; height: 100%; background: #fff; box-shadow: 4px 10px 4px rgba(90, 110, 150, .3); }
.handle { position: absolute; left: 2053px; top: 1027px; width: 5px; height: 5px; background: #fff; border: 1px solid #555; }
.scroll { display: flex; flex-direction: column; width: 17px; background: #f0f0f0; }
.scroll button { height: 17px; }
.scroll svg { width: 10px; height: 8px; fill: none; stroke: #505050; stroke-width: 2; }
.scroll .thumb { background: #cdcdcd; }
.scroll .down { margin-top: auto; }
.paint-scroll .thumb { height: 720px; margin: 0 1px; }

.status { display: flex; height: 26px; background: #f0f0f0; border-top: 1px solid #d7d7d7; }
.cell { display: flex; align-items: center; gap: 5px; width: 156px; padding-left: 4px; border-right: 1px solid #d7d7d7; }
.cell svg { width: 14px; height: 14px; fill: none; stroke: #1e395b; }
.zoom { display: flex; align-items: center; gap: 8px; margin-left: auto; padding: 0 4px 0 20px; border-left: 1px solid #d7d7d7; }
.zoom button { width: 16px; height: 16px; border: 1px solid #666; border-radius: 50%; }
.zoom svg { width: 10px; height: 10px; stroke: #444; stroke-width: 2; }
.zoom input { appearance: none; width: 90px; height: 18px; margin: 0; background: none; }
.zoom input::-webkit-slider-runnable-track { height: 4px; background: #e7eaea; border: 1px solid #d6d6d6; }
.zoom input::-webkit-slider-thumb { appearance: none; width: 10px; height: 16px; margin-top: -7px; background: #0078d7; clip-path: polygon(0 0, 100% 0, 100% 75%, 50% 100%, 0 75%); }

/* nvidia control panel */
.nv {
  position: absolute; left: 933px; top: 487px;
  display: flex; flex-direction: column;
  width: 984px; height: 746px;
  background: #fff; border: 1px solid #6b6b6b;
  box-shadow: 0 4px 18px rgba(0, 0, 0, .35);
  font-family: "Lato", sans-serif;
  color: #000;
}
.nv-title { display: flex; align-items: center; gap: 5px; height: 29px; padding-left: 8px; font: 12px/14px "Roboto", sans-serif; }
.nv-menu { display: flex; gap: 13px; height: 22px; padding-left: 7px; border-bottom: 1px solid #a0a0a0; font: 12px/14px "Roboto", sans-serif; }
.nv-toolbar { display: flex; align-items: center; height: 40px; padding-left: 10px; background: #f0f0f0; border-bottom: 1px solid #888; }
.nav-back { gap: 5px; width: 62px; justify-content: flex-start; color: #999; }
.history { width: 20px; }
.gray-caret { border-width: 4px 4px 0; border-top-color: #555; margin: 0; }
.nv-sep { width: 1px; height: 34px; margin: 0 10px; background: #888; }
.nv-main { display: flex; flex: 1; min-height: 0; background: #f0f0f0; }
.nv-side { display: flex; flex-direction: column; width: 256px; padding: 0 3px; }
.task-title { height: 21px; padding: 3px 2px; }
.tree { flex: 1; padding: 0 0 0 8px; background: #fff; border: 1px solid #828790; }
.tree ul { list-style: none; }
.tree li { line-height: 16px; }
.tree > ul > li { position: relative; padding-left: 16px; }
.tree > ul > li::before { content: "−"; position: absolute; left: 0; top: 4px; width: 9px; height: 9px; border: 1px solid #919191; background: #fff; line-height: 7px; text-align: center; color: #335; }
.tree > ul > li:not(:last-child)::after { content: ""; position: absolute; left: 4px; top: 13px; bottom: -4px; border-left: 1px dotted #808080; }
.root { display: block; height: 16px; }
.tree li li { position: relative; display: flex; height: 16px; padding-left: 18px; }
.tree li li::before { content: ""; position: absolute; left: 8px; top: 0; height: 8px; width: 9px; border-left: 1px dotted #808080; border-bottom: 1px dotted #808080; }
.tree li li:not(:last-child)::after { content: ""; position: absolute; left: 8px; top: 8px; height: 8px; border-left: 1px dotted #808080; }
.tree a { color: #1a66ac; text-decoration: none; }
.tree a.sel { background: #0078d7; color: #fff; padding-right: 4px; }
.sysinfo { display: flex; align-items: center; gap: 3px; height: 45px; padding-left: 10px; }
.sysinfo a { color: #1a66ac; }
.nv-pane { display: flex; flex: 1; min-width: 0; overflow: hidden; background: #fff; border-left: 2px solid #696969; border-top: 1px solid #696969; padding-right: 2px; }
.page { flex: 1; min-width: 0; padding-left: 17px; white-space: nowrap; }
.intro { margin: -2px 0 0 48px; }
.settings { margin: 15px 0 11px 1px; padding: 10px 0 22px 18px; border-radius: 17px 0 0 17px; background: linear-gradient(90deg, #efefef, #fff 88%); }
.settings h3, .listbox b { font-family: "Open Sans", sans-serif; font-weight: bold; }
.nv-tabs { display: flex; align-items: flex-end; margin: 22px 0 0 8px; }
.nv-tabs button { height: 18px; width: 81px; background: #f0f0f0; border: 1px solid #d9d9d9; border-bottom: 0; }
.nv-tabs .active { width: 98px; height: 21px; background: #fff; margin-bottom: -1px; position: relative; }
.panel { width: 505px; height: 351px; margin-left: 6px; padding: 12px 12px 0; background: #fff; border: 1px solid #dcdcdc; }
.panel > label { display: block; }
.program-row { display: flex; align-items: flex-start; gap: 11px; margin-top: 6px; }
.program { position: relative; }
select { display: block; appearance: none; width: 206px; height: 22px; padding: 0 20px; border: 1px solid #adadad; border-radius: 0; background: #e1e1e1; font: inherit; color: #000; }
.star { position: absolute; left: 4px; top: 4px; width: 14px; height: 14px; }
.chevron { position: absolute; right: 4px; top: 7px; width: 10px; height: 8px; }
.program-row button { width: 79px; height: 19px; background: #e1e1e1; border: 1px solid #adadad; }
.program-row button:disabled { background: #ccc; border-color: #bfbfbf; color: #838383; }
.program-row .restore { justify-content: flex-start; gap: 10px; padding-left: 3px; }
.check { display: flex; align-items: center; gap: 3px; margin-top: 8px; }
.check input { display: flex; justify-content: center; appearance: none; width: 13px; height: 13px; margin: 0; border: 1px solid #333; background: #fff; }
.check input:checked::before { content: ""; width: 4px; height: 8px; border: solid #222; border-width: 0 1px 1px 0; transform: rotate(45deg); }
.step { margin: 9px 0 6px; }
.listbox { display: flex; width: 477px; border: 1px solid #828790; padding: 1px 1px 3px 0; }
table { flex: 1; align-self: flex-start; width: 100%; border-spacing: 0; table-layout: fixed; }
th { height: 24px; padding: 0 0 0 7px; font-weight: normal; text-align: left; border-right: 1px solid #e5e5e5; }
td { height: 20px; padding: 0 0 0 7px; }
.list-scroll { width: 16px; }
.list-scroll .thumb { height: 80px; margin-top: 114px; }
.desc { margin: 6px 0 62px 18px; }
.usage { margin: 6px 0 0 18px; }
.page-scroll { width: 16px; }
.page-scroll .thumb { height: 470px; margin-top: 43px; }

/* taskbar */
.taskbar { display: flex; height: 40px; background: linear-gradient(90deg, #2a2e20 70%, #24261f 90%, #2a2a22); color: #fff; }
.taskbar > button { width: 48px; }
.search { display: flex; align-items: center; gap: 11px; width: 344px; padding-left: 12px; background: #f2f2f2; border: 1px solid #ccc; border-left: 0; }
.search input { flex: 1; min-width: 0; border: 0; padding: 0; background: none; font: inherit; font-size: 14px; line-height: 20px; }
.search input::placeholder { color: #333; opacity: 1; }
.apps { display: flex; gap: 1px; margin-left: 3px; }
.apps button { width: 48px; height: 40px; background: no-repeat center bottom / 40px 2px; }
.apps .open { background-image: linear-gradient(#76b9ed, #76b9ed); }
.apps .active { background-color: #53574b; background-size: 48px 2px; }
.tray { display: flex; margin-left: auto; }
.tray button { width: 24px; }
.tray svg { fill: none; stroke: #fff; }
.clock { width: 66px; padding-top: 2px; line-height: 18px; text-align: center; }
.tray .notify { width: 28px; margin-left: 4px; }
.tray .peek { width: 5px; margin-left: 14px; border-left: 1px solid #777; }
```
